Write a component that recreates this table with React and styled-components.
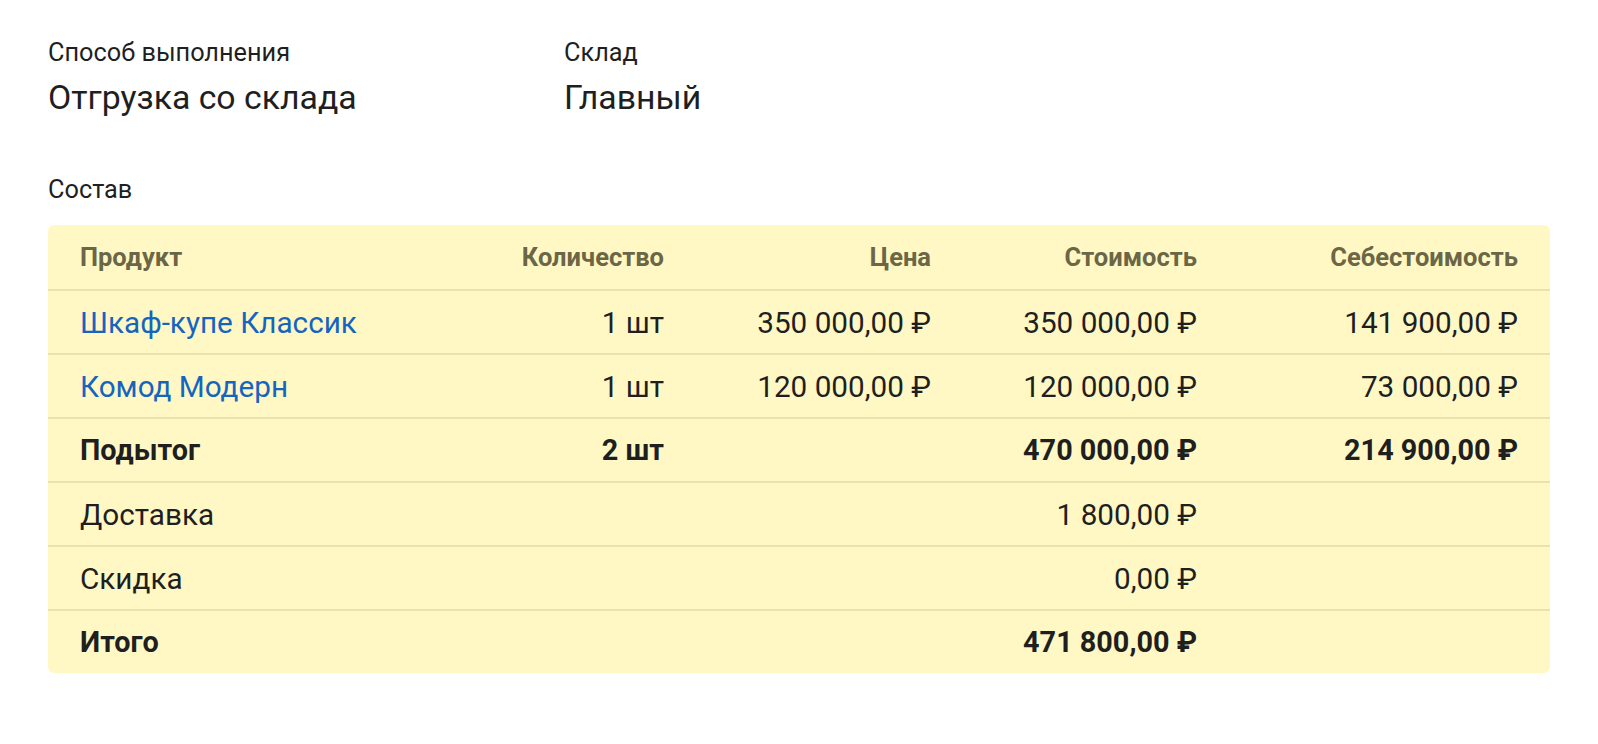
import React from 'react';
import styled, { createGlobalStyle } from 'styled-components';

const GlobalStyle = createGlobalStyle`
  body {
    margin: 0;
    background: #fff;
    font-family: Roboto, "Noto Sans", "Liberation Sans", sans-serif;
    color: #1f1f1f;
  }
`;

const Page = styled.div`
  padding: 39px 48px 40px;
`;

const Fields = styled.div`
  display: grid;
  grid-template-columns: 516px auto;
`;

const Field = styled.div`
  display: flex;
  flex-direction: column;
`;

const Label = styled.div`
  font-size: 25.3px;
  line-height: 28px;
  color: #1f1f1f;
`;

const Value = styled.div`
  margin-top: 11px;
  font-size: 33.8px;
  line-height: 40px;
  color: #1f1f1f;
`;

const SectionLabel = styled(Label)`
  margin-top: 58px;
`;

const Table = styled.div`
  margin-top: 21px;
  background: #fff8c5;
  border-radius: 6px;
  overflow: hidden;
`;

const Row = styled.div`
  display: grid;
  grid-template-columns: 400px 248px 267px 266px 1fr;
  height: 64px;
  align-items: center;
  border-top: ${(p) => (p.$first ? 'none' : '2px solid #ebe2ab')};
  box-sizing: border-box;
`;

// header cells, plain cells and bold total cells differ in size and weight
const Cell = styled.div`
  padding: 0 32px;
  text-align: ${(p) => (p.$right ? 'right' : 'left')};
  font-size: ${(p) => (p.$head ? '25.5px' : p.$bold ? '28.8px' : '29.7px')};
  white-space: nowrap;
  font-weight: ${(p) => (p.$bold ? 700 : 400)};
  color: ${(p) => (p.$head ? '#6b6646' : '#1f1f1f')};
`;

const ProductLink = styled.a`
  color: #1565c0;
  text-decoration: none;
  cursor: pointer;
`;

const rub = (v) => `${v}\u00a0₽`;

const products = [
  { name: 'Шкаф-купе Классик', qty: '1 шт', price: '350 000,00', cost: '350 000,00', self: '141 900,00' },
  { name: 'Комод Модерн', qty: '1 шт', price: '120 000,00', cost: '120 000,00', self: '73 000,00' },
];

export default function App() {
  return (
    <>
      <GlobalStyle />
      <Page>
        <Fields>
          <Field>
            <Label>Способ выполнения</Label>
            <Value>Отгрузка со склада</Value>
          </Field>
          <Field>
            <Label>Склад</Label>
            <Value>Главный</Value>
          </Field>
        </Fields>

        <SectionLabel>Состав</SectionLabel>

        <Table>
          <Row $first>
            <Cell $head $bold>Продукт</Cell>
            <Cell $head $bold $right>Количество</Cell>
            <Cell $head $bold $right>Цена</Cell>
            <Cell $head $bold $right>Стоимость</Cell>
            <Cell $head $bold $right>Себестоимость</Cell>
          </Row>
          {products.map((p) => (
            <Row key={p.name}>
              <Cell>
                <ProductLink>{p.name}</ProductLink>
              </Cell>
              <Cell $right>{p.qty}</Cell>
              <Cell $right>{rub(p.price)}</Cell>
              <Cell $right>{rub(p.cost)}</Cell>
              <Cell $right>{rub(p.self)}</Cell>
            </Row>
          ))}
          <Row>
            <Cell $bold>Подытог</Cell>
            <Cell $bold $right>2 шт</Cell>
            <Cell />
            <Cell $bold $right>{rub('470 000,00')}</Cell>
            <Cell $bold $right>{rub('214 900,00')}</Cell>
          </Row>
          <Row>
            <Cell>Доставка</Cell>
            <Cell />
            <Cell />
            <Cell $right>{rub('1 800,00')}</Cell>
            <Cell />
          </Row>
          <Row>
            <Cell>Скидка</Cell>
            <Cell />
            <Cell />
            <Cell $right>{rub('0,00')}</Cell>
            <Cell />
          </Row>
          <Row>
            <Cell $bold>Итого</Cell>
            <Cell />
            <Cell />
            <Cell $bold $right>{rub('471 800,00')}</Cell>
            <Cell />
          </Row>
        </Table>
      </Page>
    </>
  );
}
